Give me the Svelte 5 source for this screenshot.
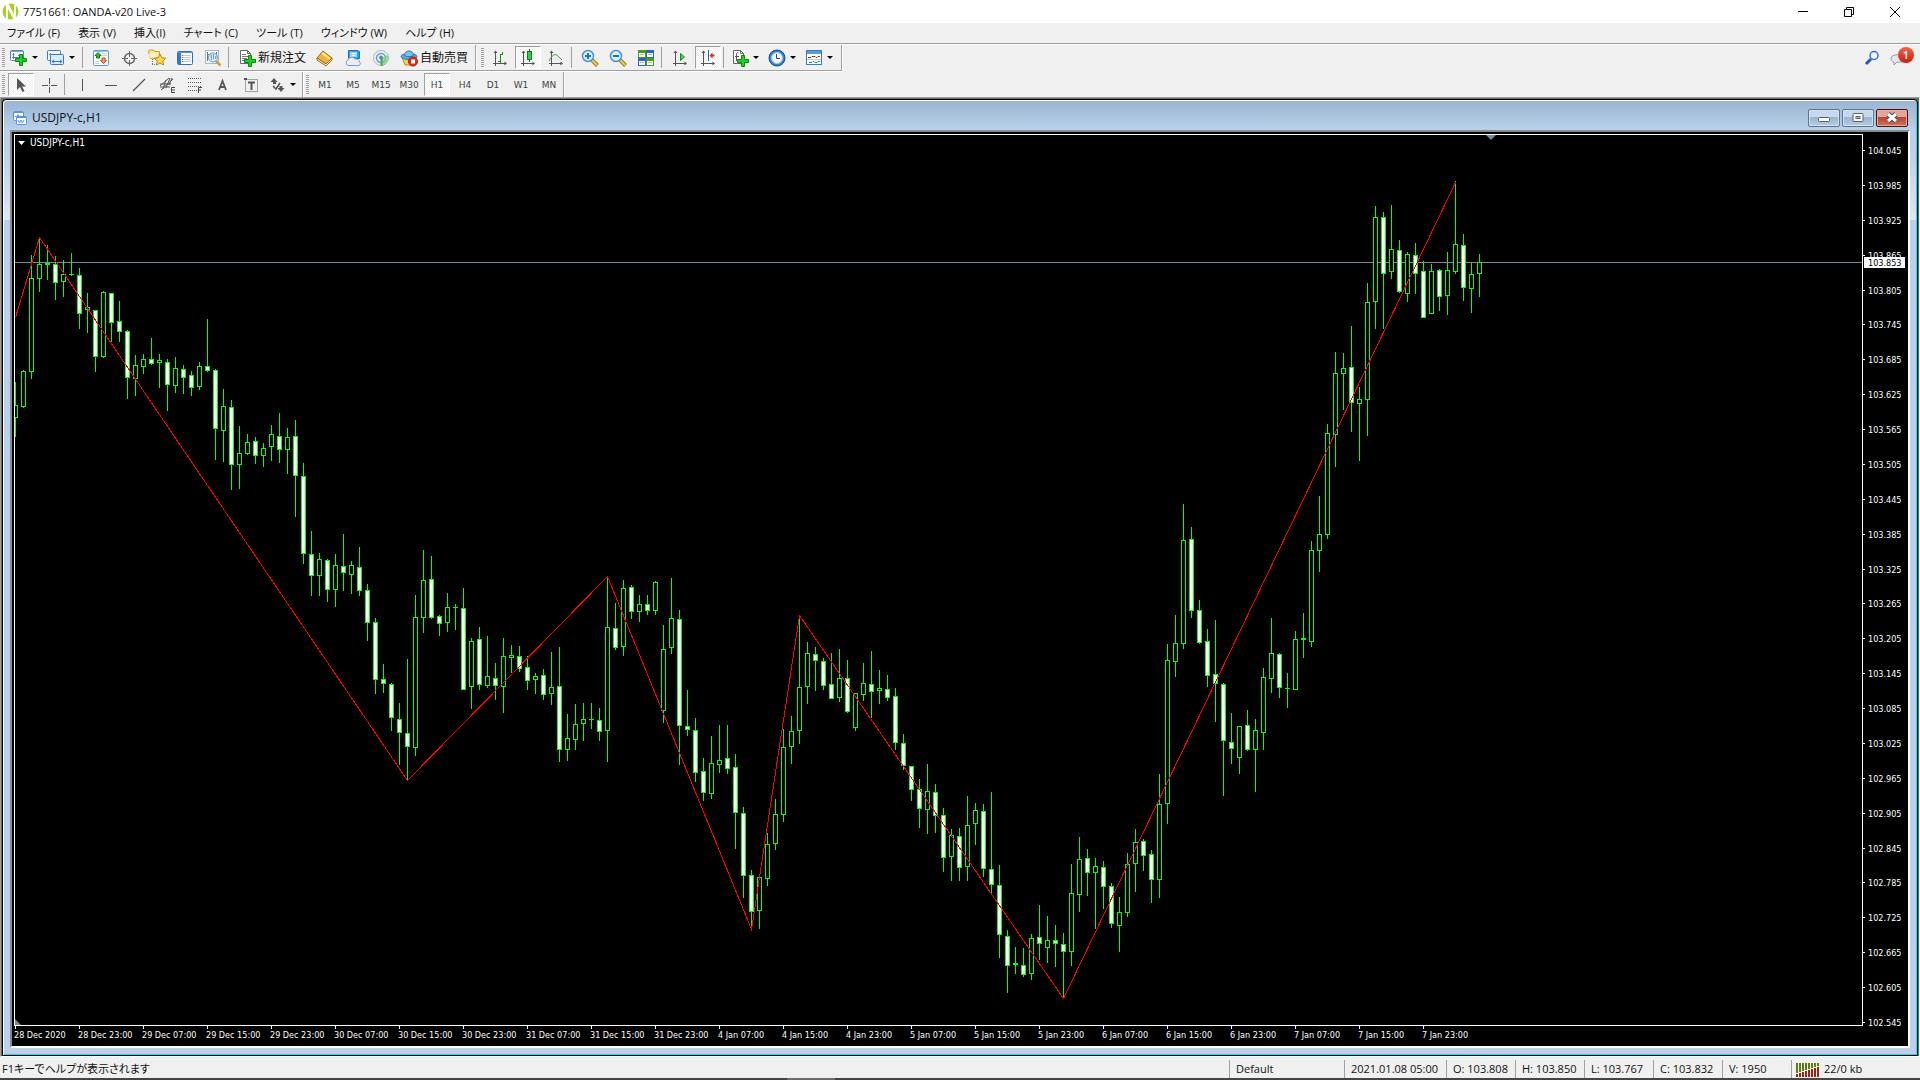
<script lang="ts">
  type Candle = [high: number, top: number, bottom: number, low: number, down?: number];

  const menus = ['ファイル (F)', '表示 (V)', '挿入(I)', 'チャート (C)', 'ツール (T)', 'ウィンドウ (W)', 'ヘルプ (H)'];

  type Tool = { icon: string; title: string; text?: string; drop?: boolean };
  const sep: Tool = { icon: 'sep', title: '' };

  const standardTools: Tool[] = [
    { icon: 'newchart', title: '新規チャート', drop: true },
    { icon: 'profiles', title: '表示切替', drop: true },
    sep,
    { icon: 'market', title: '気配値表示' },
    { icon: 'target', title: 'データウィンドウ' },
    { icon: 'folder', title: 'ナビゲーター' },
    { icon: 'terminal', title: 'ターミナル' },
    { icon: 'tester', title: 'ストラテジーテスター' },
    sep,
    { icon: 'neworder', title: '新規注文', text: '新規注文' },
    { icon: 'book', title: 'メタエディター' },
    { icon: 'cloud', title: 'VPS' },
    { icon: 'signal', title: 'シグナル' },
    { icon: 'auto', title: '自動売買', text: '自動売買' }
  ];

  const chartTools: Tool[] = [
    { icon: 'bars', title: 'バーチャート' },
    { icon: 'candles', title: 'ローソク足' },
    { icon: 'line', title: 'ラインチャート' },
    sep,
    { icon: 'zoomin', title: '拡大' },
    { icon: 'zoomout', title: '縮小' },
    { icon: 'tile', title: '整列' },
    sep,
    { icon: 'scroll', title: '自動スクロール' },
    { icon: 'shift', title: 'チャートシフト' },
    sep,
    { icon: 'indicators', title: 'インディケータ', drop: true },
    { icon: 'clock', title: '時間足設定', drop: true },
    { icon: 'template', title: '定型チャート', drop: true }
  ];

  const drawTools: Tool[] = [
    { icon: 'cursor', title: 'カーソル' },
    { icon: 'cross', title: 'クロスヘア' },
    sep,
    { icon: 'vline', title: '垂直線' },
    { icon: 'hline', title: '水平線' },
    { icon: 'trend', title: 'トレンドライン' },
    { icon: 'channel', title: 'チャネル' },
    { icon: 'fibo', title: 'フィボナッチ' },
    { icon: 'text', title: 'テキスト' },
    { icon: 'label', title: 'テキストラベル' },
    { icon: 'arrows', title: '矢印', drop: true }
  ];

  const frames = ['M1', 'M5', 'M15', 'M30', 'H1', 'H4', 'D1', 'W1', 'MN'];
  let frame = $state('H1');
  let pressed = $state(['candles', 'shift', 'cursor']);

  const quote = ['2021.01.08 05:00', 'O: 103.808', 'H: 103.850', 'L: 103.767', 'C: 103.832', 'V: 1950'];

  const times = [
    '28 Dec 2020', '28 Dec 23:00', '29 Dec 07:00', '29 Dec 15:00', '29 Dec 23:00', '30 Dec 07:00',
    '30 Dec 15:00', '30 Dec 23:00', '31 Dec 07:00', '31 Dec 15:00', '31 Dec 23:00', '4 Jan 07:00',
    '4 Jan 15:00', '4 Jan 23:00', '5 Jan 07:00', '5 Jan 15:00', '5 Jan 23:00', '6 Jan 07:00',
    '6 Jan 15:00', '6 Jan 23:00', '7 Jan 07:00', '7 Jan 15:00', '7 Jan 23:00'
  ];
  const prices = Array.from({ length: 26 }, (_, i) => (104.045 - i * 0.06).toFixed(3));

  const candles: Candle[] = [
    [382, 405, 418, 437], [370, 371, 407, 408], [255, 278, 372, 379], [237, 264, 279, 292],
    [245, 263, 265, 280], [256, 264, 283, 300, 1], [260, 274, 282, 297], [253, 274, 275, 276],
    [268, 275, 314, 329, 1], [293, 307, 310, 333], [310, 310, 357, 372, 1], [291, 292, 357, 358],
    [293, 293, 323, 342, 1], [301, 321, 332, 342, 1], [330, 331, 378, 399, 1], [355, 365, 379, 396],
    [354, 359, 367, 374], [338, 359, 364, 365, 1], [354, 360, 363, 388], [359, 362, 385, 411, 1],
    [357, 368, 386, 393], [365, 369, 378, 394, 1], [371, 375, 388, 396, 1], [362, 366, 387, 390],
    [319, 366, 371, 372, 1], [369, 370, 429, 460, 1], [389, 406, 431, 462], [400, 407, 465, 490, 1],
    [426, 453, 465, 489], [434, 442, 454, 455], [437, 441, 456, 464, 1], [443, 448, 456, 467],
    [425, 434, 447, 461], [413, 436, 450, 463, 1], [428, 437, 450, 474], [420, 436, 476, 517, 1],
    [463, 476, 554, 564, 1], [531, 554, 576, 596, 1], [553, 559, 576, 596], [559, 560, 590, 602, 1],
    [554, 565, 590, 607], [534, 566, 573, 591, 1], [561, 565, 575, 594], [547, 567, 591, 596, 1],
    [584, 590, 623, 641, 1], [618, 622, 680, 694, 1], [664, 679, 684, 693, 1], [683, 684, 718, 731, 1],
    [703, 719, 733, 765, 1], [659, 733, 747, 780, 1], [595, 617, 748, 756], [550, 580, 618, 633],
    [556, 579, 618, 619, 1], [615, 616, 624, 636, 1], [593, 607, 623, 632], [604, 607, 608, 630],
    [588, 608, 690, 690, 1], [638, 641, 687, 709], [627, 639, 685, 690, 1], [636, 676, 686, 688],
    [663, 678, 686, 700, 1], [638, 656, 687, 713], [645, 655, 658, 673], [646, 656, 669, 672, 1],
    [656, 667, 681, 690, 1], [673, 676, 680, 694], [669, 675, 695, 700, 1], [652, 687, 694, 705],
    [647, 686, 750, 762, 1], [714, 738, 750, 761], [704, 724, 740, 750], [703, 719, 724, 741],
    [703, 719, 720, 729], [708, 720, 732, 741, 1], [577, 627, 731, 762], [603, 628, 648, 650, 1],
    [580, 588, 647, 656], [585, 587, 612, 619, 1], [595, 604, 612, 622], [595, 604, 611, 615, 1],
    [581, 582, 611, 615], [625, 649, 711, 723], [578, 618, 648, 654], [610, 619, 726, 765, 1],
    [690, 726, 730, 736, 1], [718, 730, 773, 782, 1], [758, 771, 793, 801, 1], [736, 763, 794, 799],
    [725, 760, 765, 773], [725, 758, 769, 774, 1], [754, 767, 813, 849, 1], [807, 813, 876, 898, 1],
    [870, 875, 912, 928, 1], [877, 877, 911, 929], [833, 844, 879, 886], [799, 814, 844, 850],
    [729, 747, 815, 822], [716, 731, 747, 764], [615, 687, 731, 744], [642, 653, 687, 704],
    [647, 654, 661, 691, 1], [658, 661, 686, 690, 1], [653, 684, 699, 699, 1], [649, 678, 698, 702],
    [660, 678, 712, 713, 1], [693, 693, 728, 731], [663, 683, 695, 701], [651, 684, 692, 718, 1],
    [670, 688, 691, 704], [675, 689, 698, 701, 1], [688, 696, 743, 750, 1], [734, 743, 766, 770, 1],
    [766, 766, 790, 801, 1], [779, 789, 809, 828, 1], [764, 791, 810, 834], [784, 792, 816, 833, 1],
    [808, 815, 858, 872, 1], [829, 835, 857, 881], [828, 836, 868, 881, 1], [796, 825, 867, 881],
    [803, 810, 824, 845], [804, 811, 869, 877, 1], [792, 869, 885, 894, 1], [865, 885, 935, 958, 1],
    [930, 936, 966, 993, 1], [947, 963, 965, 974], [948, 965, 975, 977, 1], [934, 938, 974, 980],
    [905, 937, 944, 960, 1], [916, 940, 948, 963], [925, 940, 944, 967, 1], [933, 944, 952, 998, 1],
    [864, 893, 952, 966], [837, 859, 895, 912], [849, 858, 873, 896, 1], [858, 866, 873, 929],
    [861, 867, 887, 909, 1], [883, 886, 924, 928, 1], [897, 912, 926, 952], [853, 864, 913, 917],
    [829, 842, 864, 892], [839, 841, 856, 871, 1], [850, 854, 880, 903, 1], [774, 804, 880, 898],
    [644, 660, 804, 824], [615, 643, 662, 677], [504, 540, 644, 649], [527, 539, 611, 618, 1],
    [600, 610, 643, 644, 1], [629, 641, 676, 687, 1], [620, 674, 684, 722, 1], [683, 684, 741, 796, 1],
    [713, 742, 749, 764, 1], [726, 726, 758, 774], [710, 725, 750, 751, 1], [719, 730, 750, 792],
    [668, 677, 733, 750], [618, 653, 679, 693], [653, 654, 688, 698, 1], [673, 688, 689, 708],
    [631, 639, 690, 690], [613, 638, 640, 658], [541, 550, 642, 647], [496, 534, 551, 572],
    [424, 433, 535, 539], [352, 373, 435, 467], [353, 368, 374, 410], [326, 367, 403, 432, 1],
    [387, 399, 404, 461], [283, 302, 400, 436], [206, 217, 302, 329], [212, 217, 274, 329, 1],
    [205, 249, 272, 279], [240, 250, 292, 293, 1], [252, 254, 294, 302], [243, 255, 274, 294, 1],
    [261, 271, 318, 318, 1], [264, 271, 314, 314], [269, 270, 297, 311, 1], [252, 270, 296, 315],
    [181, 244, 272, 274], [234, 245, 288, 301, 1], [263, 274, 289, 313], [254, 262, 274, 297]
  ];

  // zigzag turning points: candle index, y
  const zigzag = [[0, 317], [3, 237], [49, 780], [74, 576], [92, 929], [98, 615], [131, 998], [180, 182]];

  const STEP = 8;
  const LEFT = 3;
  const OFFSET = 132;
  const PRICE_STEP = 34.88;
  const LEVEL = 130;

  let w = $state(1896);
  let h = $state(914);
  let right = $derived(w - 46);
  let bottom = $derived(h - 21);

  const zigzagPoints = zigzag
    .map(([i, y]) => `${LEFT + i * STEP + 0.5},${y - OFFSET + 0.5}`)
    .join(' ');

  function toggle(name: string) {
    pressed = pressed.includes(name) ? pressed.filter((p) => p !== name) : [...pressed, name];
  }
</script>

{#snippet plus(x: number, y: number)}
  <path
    transform="translate({x} {y})"
    d="M4.500 .5h3v4h4v3h-4v4h-3v-4h-4v-3h4z"
    fill="#1fd21f"
    stroke="#078a07"
  />
{/snippet}

{#snippet axes()}
  <path d="M4.500 3v14M2 14.500h13" stroke="#555" fill="none" />
  <path d="M4.500 1.500l-2 2.500h4zM16 14.500l-2.500-2v4z" fill="#555" />
{/snippet}

{#snippet icon(name: string)}
  <svg class="icon" width="18" height="18" viewBox="0 0 18 18" aria-hidden="true">
    {#if name === 'newchart'}
      <rect x=".5" y="1.500" width="13" height="10" rx="1" fill="#f4faff" stroke="#4a86c0" />
      <path d="M1 2.500h12" stroke="#6aa5dc" />
      <path d="M3.500 4v6M2 8.500h7M2.500 5.500h2M8 6.500h2" stroke="#5b7f9f" fill="none" />
      {@render plus(5, 5)}
    {:else if name === 'profiles'}
      <rect x=".5" y="1.500" width="13" height="10" rx="1" fill="#eaf5ff" stroke="#3d79b8" />
      <path d="M3.500 4v6M2 5.500h3M5 5.500h5" stroke="#5b8fbe" fill="none" />
      <rect x="3.500" y="5.500" width="13" height="10" rx="1" fill="#d8ecfd" stroke="#3d79b8" />
      <path d="M5 12.500h10M7 11l-2 1.500L7 14M13 11l2 1.500L13 14" stroke="#3d79b8" fill="none" />
    {:else if name === 'market'}
      <rect x="1.500" y="1.500" width="15" height="15" rx="1" fill="#fff" stroke="#5a9bd6" />
      <path d="M2 2.500h14" stroke="#8fc1ec" />
      <path d="M6 3.500l3 3H7.500v2.500h-3V6.500H3z" fill="#2fbf2f" stroke="#087a08" />
      <path d="M11.500 14.500l-3-3H10V9h3v2.500h1.500z" fill="#ff9a63" stroke="#d2451a" />
      <path d="M10 4.500h5M10 6.500h5M3 12.500h4M3 14.500h4" stroke="#ccc" />
    {:else if name === 'target'}
      <circle cx="9.500" cy="9.500" r="5" fill="none" stroke="#666" stroke-width="1.500" />
      <path d="M9.500 2v6M9.500 11v6M2 9.500h6M11 9.500h6" stroke="#666" />
    {:else if name === 'folder'}
      <path d="M.5 3l1-2h4l1 1.500h5v6l-9 1z" fill="#ffe79a" stroke="#c79a2c" />
      <path d="M1 5l9-1v4l-8 1z" fill="#fff3c4" />
      <path d="M4.500 10v6M4 15.500h4" stroke="#777" stroke-dasharray="1 1" />
      <path d="M12 5l1.800 3.800 4 .5-3 2.700.8 4-3.600-2-3.600 2 .8-4-3-2.700 4-.5z" fill="#ffd84a" stroke="#b8861c" />
    {:else if name === 'terminal'}
      <rect x="1.500" y="2.500" width="15" height="13" rx="1" fill="#fff" stroke="#2f6fb4" />
      <path d="M2 3.500h14" stroke="#5a9bd6" />
      <path d="M2 4h3v11H2z" fill="#3c78c2" />
      <path d="M7 6.500h8M7 8.500h8M7 10.500h8M7 12.500h8" stroke="#b7cfe6" />
      <path d="M6.500 6v7" stroke="#d33" stroke-dasharray="1 1" />
    {:else if name === 'tester'}
      <rect x="1.500" y="1.500" width="13" height="13" fill="#f5f9fd" stroke="#a5b9cc" />
      <path d="M3 5.500h2M3.500 3v9M12.500 3v6M6.500 4v4" stroke="#56789a" fill="none" />
      <path d="M12 12l4.500 4.500" stroke="#d6a02c" stroke-width="2.500" />
      <circle cx="9" cy="8.500" r="4.500" fill="#cfe6f8" fill-opacity=".8" stroke="#6f9ac0" />
      <path d="M7.500 6v5M9.500 5v5M11.500 7v3" stroke="#7ba3c6" />
    {:else if name === 'neworder' || name === 'indicators'}
      <path d="M2.500 1.500h7l3 3v10h-10z" fill="#fff" stroke="#666" />
      <path d="M9.500 1.500v3h3" fill="none" stroke="#666" />
      {#if name === 'neworder'}
        <path d="M4 5.500h4M4 7.500h7M4 9.500h5M4 11.500h4" stroke="#777" />
      {:else}
        <path d="M7.500 4c-2-1-2 1-2 2v6M4 7.500h4" stroke="#555" fill="none" />
      {/if}
      {@render plus(6, 6)}
    {:else if name === 'book'}
      <path d="M7 2l9 7-6 6-9-6z" fill="#e9b73e" stroke="#9c6c12" />
      <path d="M7 3l7.500 6-1.500 1.500L5.500 5z" fill="#ffe08a" />
      <path d="M1 9v2l9 6 6-6V9l-6 6z" fill="#f8f0d0" stroke="#9c6c12" />
    {:else if name === 'cloud'}
      <path d="M4.500 1.500h9l2 1v7h-11z" fill="#2f9bea" stroke="#1c6fb8" />
      <path d="M6 3h7v5H6z" fill="#9ad6fb" />
      <path d="M8 4.500h4M8 6.500h3" stroke="#fff" />
      <path d="M4 16.500a3 3 0 0 1 0-5.500 4 4 0 0 1 7-1 3.500 3.500 0 0 1 4.500 3 2 2 0 0 1-.5 3.500z" fill="#e8effa" stroke="#7f9cc4" />
    {:else if name === 'signal'}
      <circle cx="9" cy="9" r="7.500" fill="none" stroke="#9dbfd0" />
      <circle cx="9" cy="9" r="4.500" fill="none" stroke="#6a9fc0" stroke-width="1.500" />
      <path d="M9 9v8a8 8 0 0 0 6-4 8 8 0 0 0 1-7" fill="#7fcf7a" fill-opacity=".7" />
      <path d="M9.500 9v8" stroke="#3fae3f" stroke-width="2" />
      <circle cx="9" cy="8.500" r="2" fill="#4d8fc4" />
    {:else if name === 'auto'}
      <path d="M2 8l3 8h8l3-8z" fill="#f6d056" stroke="#b98d1d" />
      <ellipse cx="9" cy="7.500" rx="8" ry="3" fill="#58a9dc" stroke="#2b77ae" />
      <path d="M4.500 6.500c0-6 9-6 9 0-2 1.500-7 1.500-9 0z" fill="#7fc3ec" stroke="#2b77ae" />
      <circle cx="13" cy="12.500" r="4.500" fill="#e0301e" stroke="#a81c10" />
      <rect x="11" y="10.500" width="4" height="4" fill="#fff" />
    {:else if name === 'bars'}
      {@render axes()}
      <path d="M9.500 5v9M7 12.500h3M9 5.500h3M11.500 3v3" stroke="#1c8a2b" fill="none" />
    {:else if name === 'candles'}
      {@render axes()}
      <path d="M10.500 0v13" stroke="#0b6e18" />
      <rect x="8.500" y="2.500" width="4" height="8" fill="#2fd04a" stroke="#0b7a1b" />
    {:else if name === 'line'}
      {@render axes()}
      <path d="M2 12c4-8 7-7 9-5l4 4" stroke="#35a043" fill="none" />
    {:else if name === 'zoomin' || name === 'zoomout'}
      <path d="M11 11l5.500 5.500" stroke="#9b7b1c" stroke-width="4" />
      <path d="M11 11l5 5" stroke="#f1d24a" stroke-width="2" />
      <circle cx="7" cy="7" r="5.500" fill="#d5efff" stroke="#4b92d0" stroke-width="1.500" />
      <path d="M4 7h6" stroke="#2d6fae" stroke-width="2" />
      {#if name === 'zoomin'}<path d="M7 4v6" stroke="#2d6fae" stroke-width="2" />{/if}
    {:else if name === 'tile'}
      <path d="M1 1h8v8H1zM9 9h8v8H9z" fill="#4d9c16" />
      <path d="M9 1h8v8H9zM1 9h8v8H1z" fill="#2a62cf" />
      <path d="M2 4h6v4H2zM10 4h6v4h-6zM2 12h6v4H2zM10 12h6v4h-6z" fill="#fff" />
      <path d="M3 5.500h4M11 5.500h4M3 13.500h4M11 13.500h4" stroke="#9cc49c" />
    {:else if name === 'scroll'}
      {@render axes()}
      <path d="M9.500 4.500v7l4-3.500z" fill="#4fd65f" stroke="#0f8a22" />
    {:else if name === 'shift'}
      {@render axes()}
      <path d="M9.500 1v11" stroke="#2a62a8" />
      <path d="M10.500 6.500l3-3v2h2v2h-2v2z" fill="#c43c10" />
    {:else if name === 'clock'}
      <circle cx="9" cy="9" r="8" fill="#2c82d6" stroke="#0f4f94" />
      <circle cx="9" cy="9" r="5.500" fill="#f2f7fb" stroke="#9fc7ea" />
      <path d="M8.500 5v4.500H12" stroke="#444" fill="none" />
    {:else if name === 'template'}
      <rect x="1.500" y="1.500" width="15" height="14" fill="#fff" stroke="#3c78b8" />
      <path d="M2 2h14v3H2z" fill="#5a9bdc" />
      <path d="M3 8.500h3l1-1h3l1 1h1l1-1h2" stroke="#8a2a12" fill="none" />
      <path d="M2 10.500h14" stroke="#b7cfe6" />
      <path d="M4 13.500h3l1-1h1l1 1h2l1-1h2" stroke="#1c9a3a" fill="none" />
    {:else if name === 'cursor'}
      <path d="M5 2v12l3-3 2.500 5 2-1L10 10.500h4z" fill="#555" />
    {:else if name === 'cross'}
      <path d="M9.500 2v6M9.500 11v6M2 9.500h6M11 9.500h6" stroke="#555" />
      <path d="M9 9h1v1H9z" fill="#555" />
    {:else if name === 'vline'}
      <path d="M8.500 3v12" stroke="#555" />
    {:else if name === 'hline'}
      <path d="M3 9.500h12" stroke="#555" />
    {:else if name === 'trend'}
      <path d="M3 15L15 3" stroke="#555" stroke-width="1.200" />
    {:else if name === 'channel'}
      <path d="M2 10L11 2M3 14L15 3M2 8h11M2 11h10M5 13L8 4M8 12l4-10M11 9l3-7" stroke="#555" fill="none" />
      <path d="M17 11.500h-3.500v5H17M14 14h3" stroke="#444" fill="none" />
    {:else if name === 'fibo'}
      <path d="M2 2.500h14M2 6.500h14M2 10.500h14M2 14.500h9" stroke="#555" stroke-dasharray="1 1" />
      <path d="M16 11.500h-3.500V17M12 14h3" stroke="#444" fill="none" />
    {:else if name === 'text'}
      <path d="M5 14L8.500 5l3.500 9M6.500 11h4" stroke="#555" stroke-width="1.800" fill="none" />
    {:else if name === 'label'}
      <rect x="3.500" y="3.500" width="12" height="12" fill="none" stroke="#555" stroke-dasharray="1 1" />
      <path d="M2 2h3v2H2z" fill="#555" />
      <path d="M6 6.500h7M9.500 6v8" stroke="#555" stroke-width="2" fill="none" />
    {:else if name === 'arrows'}
      <path d="M6 2l3.500 4H8v2H5V6H2.500z" fill="#555" />
      <path d="M13 16l-3.500-4h2v-2h3v2h2z" fill="#555" />
      <path d="M5 10l3 3 4-6" stroke="#555" stroke-width="1.500" fill="none" />
    {/if}
  </svg>
{/snippet}

{#snippet toolbar(items: Tool[])}
  {#each items as tool}
    {#if tool.icon === 'sep'}
      <span class="sep"></span>
    {:else}
      <button
        class="tool"
        class:pressed={pressed.includes(tool.icon)}
        class:drop={tool.drop}
        class:wide={tool.text}
        aria-label={tool.title}
        onclick={() => toggle(tool.icon)}
      >
        {@render icon(tool.icon)}
        {#if tool.text}<span>{tool.text}</span>{/if}
        {#if tool.drop}<i class="caret"></i>{/if}
      </button>
    {/if}
  {/each}
{/snippet}

<div class="app">
  <header class="titlebar">
    <svg width="17" height="17" viewBox="0 0 17 17" aria-hidden="true">
      <circle cx="8.500" cy="8.500" r="8" fill="#a6d21c" />
      <path d="M4 0h2l6 11V2h2v15h-2L6 6v10H4z" fill="#fff" />
    </svg>
    <h1>7751661: OANDA-v20 Live-3</h1>
    <div class="sysbuttons">
      <button aria-label="最小化">
        <svg width="12" height="12"><path d="M1 5.500h10" stroke="#000" /></svg>
      </button>
      <button aria-label="元に戻す">
        <svg width="12" height="12">
          <path d="M1.500 3.500h7v7h-7zM3.500 3V1.500h7v7H9" fill="none" stroke="#000" />
        </svg>
      </button>
      <button aria-label="閉じる">
        <svg width="12" height="12"><path d="M1 1l10 10M11 1L1 11" stroke="#000" /></svg>
      </button>
    </div>
  </header>

  <nav class="menubar">
    {#each menus as menu}
      <button>{menu}</button>
    {/each}
  </nav>

  <div class="toolbars">
    <div class="row">
      <div class="bar underlined">
        <span class="grip"></span>
        {@render toolbar(standardTools)}
      </div>
      <div class="bar underlined">
        <span class="grip"></span>
        {@render toolbar(chartTools)}
      </div>
      <div class="corner">
        <button aria-label="検索">
          <svg width="16" height="16" viewBox="0 0 16 16">
            <path d="M2 14l5-5" stroke="#2456c8" stroke-width="3" />
            <circle cx="10" cy="5.500" r="4" fill="#f4f8ff" stroke="#2f6bdb" stroke-width="1.500" />
          </svg>
        </button>
        <button class="chat" aria-label="チャット">
          <svg width="20" height="16" viewBox="0 0 20 16">
            <path d="M1 8c0-4 14-5 14 0s-5 4-8 4l-3 3V12C2 12 1 10 1 8z" fill="#e6e6ec" stroke="#999" />
          </svg>
          <span class="badge">1</span>
        </button>
      </div>
    </div>
    <div class="row lower">
      <div class="bar">
        <span class="grip"></span>
        {@render toolbar(drawTools)}
      </div>
      <div class="bar">
        <span class="grip"></span>
        {#each frames as f}
          <button class="tool frame" class:pressed={frame === f} onclick={() => (frame = f)}>{f}</button>
        {/each}
      </div>
    </div>
  </div>

  <main class="workspace">
    <section class="window">
      <div class="caption">
        <svg width="16" height="16" viewBox="0 0 16 16" aria-hidden="true">
          <rect x="1.500" y="1.500" width="10" height="9" rx="1" fill="#fff" stroke="#5b8fe0" />
          <path d="M2 2.500h9" stroke="#5b8fe0" />
          <path d="M3 6.500h2l1-2 1 3 1-2" stroke="#5b8fe0" fill="none" />
          <rect x="4.500" y="6.500" width="10" height="8" rx="1" fill="#fff" stroke="#5b8fe0" />
          <path d="M5 7.500h9" stroke="#5b8fe0" />
          <path d="M6 10l1.500 3L9 10l1.500 3 1.500-3" stroke="#5b8fe0" fill="none" />
        </svg>
        <h2>USDJPY-c,H1</h2>
        <div class="winbuttons">
          <button aria-label="最小化">
            <svg width="12" height="12">
              <rect x=".5" y="5.500" width="11" height="4" rx="1" fill="#fff" stroke="#555d6b" />
            </svg>
          </button>
          <button aria-label="最大化">
            <svg width="12" height="12">
              <rect x="1" y="1.500" width="10" height="8" rx="1" fill="#fff" stroke="#555d6b" />
              <rect x="4" y="4.500" width="4" height="2" fill="#9fb9d4" stroke="#555d6b" />
            </svg>
          </button>
          <button class="close" aria-label="閉じる">
            <svg width="12" height="12">
              <path d="M2 2l8 7M10 2L2 9" stroke="#4d4652" stroke-width="5" />
              <path d="M2 2l8 7M10 2L2 9" stroke="#fff" stroke-width="3" />
            </svg>
          </button>
        </div>
      </div>

      <div class="chart" bind:clientWidth={w} bind:clientHeight={h}>
        <svg width={w} height={h} role="img" aria-label="USDJPY-c,H1">
          <rect x="2" y={LEVEL} width={right - 2} height="1" fill="#778899" />
          {#each candles as [high, top, low, end, down], i}
            {@const x = LEFT + i * STEP}
            <rect {x} y={high - OFFSET} width="1" height={end - high} class="wick" />
            <rect x={x - 2} y={top - OFFSET} width="5" height={low - top} class="wick" />
            {#if low - top > 2}
              <rect
                x={x - 1}
                y={top - OFFSET + 1}
                width="3"
                height={low - top - 2}
                fill={down ? '#fff' : '#000'}
              />
            {/if}
          {/each}
          <polyline points={zigzagPoints} class="zigzag" />

          <rect x="0" y="0" width="2" height={h} fill="#000" />
          <path
            d="M2.500 {bottom}V2.500H{right + 0.5}V{bottom + 0.5}H2"
            fill="none"
            stroke="#fff"
            shape-rendering="crispEdges"
          />
          <path d="M3 {bottom - 6}l6 6h-6z" fill="#778899" />
          <path d="M1474 3h10l-5 5z" fill="#778899" />

          <path d="M6 9h7l-3.500 4z" fill="#fff" />
          <text x="18" y="14" class="symbol">USDJPY-c,H1</text>

          {#each prices as price, i}
            {@const y = Math.round(18 + i * PRICE_STEP)}
            <rect x={right + 1} {y} width="2" height="1" fill="#fff" />
            <text x={right + 6} y={y + 4}>{price}</text>
          {/each}
          <rect x={right + 2} y={LEVEL - 5} width="41" height="11" fill="#fff" />
          <text x={right + 6} y={LEVEL + 4} class="current">103.853</text>

          {#each times as time, i}
            <rect x={LEFT + i * 64} y={bottom} width="1" height="4" fill="#fff" />
            <text x={LEFT + i * 64 - 1} y={bottom + 13}>{time}</text>
          {/each}
        </svg>
      </div>
    </section>
  </main>

  <footer class="status">
    <span class="hint">F1キーでヘルプが表示されます</span>
    <span class="cell profile">Default</span>
    {#each quote as q, i}
      <span class="cell" class:date={i === 0}>{q}</span>
    {/each}
    <span class="cell traffic">
      <svg width="24" height="15" viewBox="0 0 24 15" aria-hidden="true">
        {#each Array(8) as _, i}
          <rect x={i * 3} y="1" width="2" height={10 - i} fill="#5b7d12" />
          <rect x={i * 3} y={12 - i} width="2" height={3 + i} fill="#96260f" />
        {/each}
      </svg>
      22/0 kb
    </span>
  </footer>
  <div class="edge"><span></span></div>
</div>

<style>
  :global(body) {
    margin: 0;
    background: #f0f0f0;
  }
  .app {
    display: flex;
    flex-direction: column;
    height: 100vh;
    overflow: hidden;
    background: #f0f0f0;
    color: #111;
    font: 11px/16px 'Open Sans', 'Noto Sans CJK JP', sans-serif;
    font-feature-settings: 'palt';
  }
  button {
    margin: 0;
    padding: 0;
    border: 0;
    background: none;
    color: inherit;
    font: inherit;
    font-feature-settings: inherit;
  }
  h1,
  h2 {
    margin: 0;
    font: inherit;
  }
  svg {
    display: block;
    flex: none;
  }

  .titlebar {
    display: flex;
    align-items: center;
    height: 23px;
    padding-left: 2px;
    gap: 4px;
    background: #fff;
  }
  .sysbuttons {
    display: flex;
    margin-left: auto;
    padding-right: 2px;
  }
  .sysbuttons button {
    display: grid;
    place-items: center;
    width: 46px;
    height: 22px;
  }

  .menubar {
    display: flex;
    height: 20px;
    border-bottom: 1px solid #a0a0a0;
  }
  .menubar button {
    padding: 0 11px 0 7px;
  }

  .toolbars {
    border-top: 1px solid #fff;
  }
  .row {
    display: flex;
    box-sizing: border-box;
    height: 26px;
  }
  .lower {
    padding-top: 1px;
  }
  .bar {
    display: flex;
    align-items: center;
    border-right: 1px solid #a0a0a0;
    box-shadow: 1px 0 #fff;
  }
  .bar + .bar {
    padding-left: 1px;
  }
  .underlined {
    padding-right: 2px;
    border-bottom: 1px solid #a0a0a0;
    box-shadow: 1px 1px #fff;
  }
  .underlined + .underlined {
    padding-left: 3px;
  }
  .grip {
    width: 3px;
    height: 20px;
    margin: 0 2px;
    background: repeating-linear-gradient(#a0a0a0 0 1px, #f0f0f0 1px 2px);
  }
  .sep {
    width: 1px;
    height: 21px;
    margin: 0 4px 0 1px;
    background: #a0a0a0;
  }
  .tool {
    display: flex;
    align-items: center;
    justify-content: center;
    box-sizing: border-box;
    width: 26px;
    height: 23px;
    margin: 0 1px;
    border: 1px solid transparent;
  }
  .tool.drop {
    justify-content: flex-start;
    width: 37px;
    margin: 0;
    padding-left: 2px;
    gap: 4px;
  }
  .tool.wide {
    width: auto;
    margin: 0;
    padding: 0 4px;
    gap: 2px;
    font-size: 12px;
  }
  .tool.pressed {
    border-color: #a0a0a0 #fff #fff #a0a0a0;
    background: repeating-conic-gradient(#fff 0 25%, #f0f0f0 0 50%) 0 0 / 2px 2px;
  }
  .caret {
    border: 3px solid transparent;
    border-top-color: #000;
    border-bottom: 0;
  }
  .frame {
    color: #444;
    font: 9px/16px 'DejaVu Sans', sans-serif;
  }
  .corner {
    display: flex;
    align-items: center;
    gap: 10px;
    margin-left: auto;
    padding-right: 6px;
  }
  .chat {
    position: relative;
    width: 24px;
  }
  .badge {
    position: absolute;
    top: -3px;
    right: 0;
    width: 16px;
    height: 16px;
    border-radius: 50%;
    background: linear-gradient(#f0624a, #d01c0c);
    color: #fff;
    font-weight: 600;
    text-align: center;
  }

  .workspace {
    display: flex;
    flex: 1;
    min-height: 0;
    padding: 1px 1px 0;
    border: 1px solid #a0a0a0;
    border-right-color: #f0f0f0;
    border-bottom-color: #fff;
    background: #696969;
  }
  .window {
    display: flex;
    flex: 1;
    flex-direction: column;
    min-width: 0;
    box-sizing: border-box;
    padding: 1px 7px 7px;
    border: 1px solid #000;
    border-radius: 4px 4px 0 0;
    background: linear-gradient(#99b4d1, #b9d1ea 30px, #b9d1ea 50px, #dce8f5 120px, #b9d1ea 120px);
    box-shadow:
      inset 1px 1px #fff,
      inset -1px -1px #28d0f0;
  }
  .caption {
    display: flex;
    align-items: center;
    box-sizing: border-box;
    height: 29px;
    padding: 5px 2px 0;
    gap: 4px;
  }
  .caption h2 {
    font-size: 12px;
  }
  .winbuttons {
    display: flex;
    gap: 2px;
    margin-left: auto;
  }
  .winbuttons button {
    display: grid;
    place-items: center;
    box-sizing: border-box;
    width: 32px;
    height: 18px;
    border: 1px solid #5b7290;
    border-radius: 2px;
    background: linear-gradient(#c5d8ec 45%, #9ab4cf 45%, #b5cce4);
    box-shadow: inset 0 0 0 1px #d6e4f2;
  }
  .winbuttons .close {
    border-color: #4a0f14;
    background: linear-gradient(#e3a499 45%, #b8412c 45%, #d07560);
    box-shadow: inset 0 0 0 1px #e5aca2;
  }
  .chart {
    flex: 1;
    min-height: 0;
    overflow: hidden;
    border: 2px solid;
    border-color: #8a8a8a #fff #fff #8a8a8a;
    background: #000;
  }
  .chart text {
    fill: #fff;
    font: 9px 'DejaVu Sans Condensed', 'DejaVu Sans', sans-serif;
  }
  .chart .symbol {
    font-size: 10px;
  }
  .chart .current {
    fill: #000;
  }
  .wick {
    fill: #0f0;
  }
  .zigzag {
    fill: none;
    stroke: #f00;
    shape-rendering: crispEdges;
  }

  .status {
    display: flex;
    align-items: flex-end;
    height: 21px;
  }
  .hint {
    flex: 1;
    padding-left: 2px;
    line-height: 18px;
  }
  .cell {
    box-sizing: border-box;
    width: 69px;
    height: 18px;
    padding-left: 6px;
    border-left: 1px solid #a0a0a0;
    line-height: 18px;
    white-space: nowrap;
  }
  .profile {
    width: 115px;
  }
  .date {
    width: 102px;
  }
  .traffic {
    display: flex;
    align-items: center;
    gap: 4px;
    width: 129px;
    padding-left: 4px;
  }
  .edge {
    height: 2px;
    padding-left: 41%;
    background: #444;
  }
  .edge span {
    display: block;
    width: 48px;
    height: 2px;
    background: #6a6a6a;
  }
</style>
